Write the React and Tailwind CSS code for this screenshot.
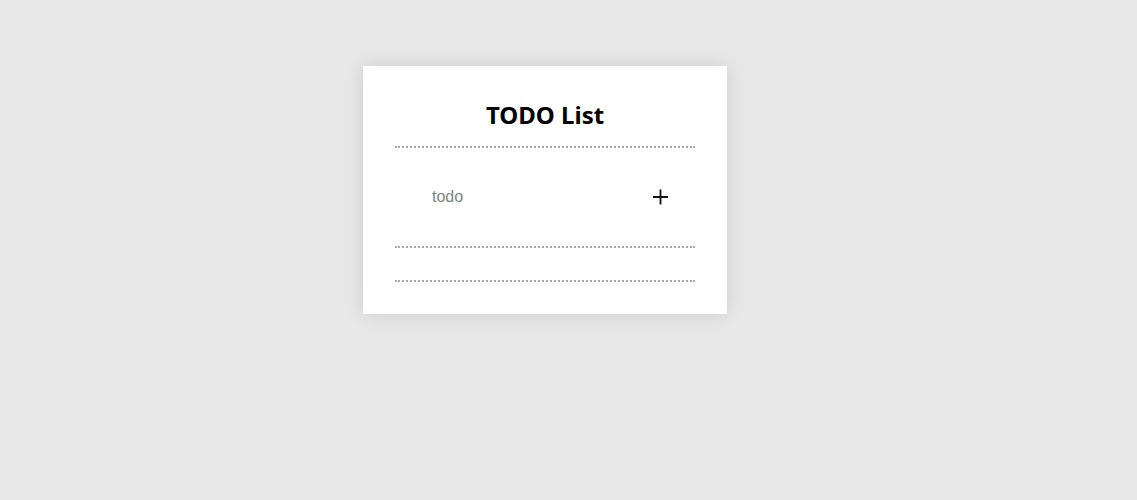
export default function App() {
  return (
    <div className="min-h-[500px] bg-[#e8e8e8] pt-[66px] pl-[363px]">
      <div className="w-[364px] bg-white px-8 pt-[33px] pb-[32px] shadow-[0_0_18px_rgba(0,0,0,0.12)]">
        <h1
          className="text-center text-[24px] leading-[32px] font-bold text-black pb-[15px] border-b-2 border-dotted border-[#a8a8a8]"
          style={{ fontFamily: '"Noto Sans", "Noto Sans CJK KR", sans-serif' }}
        >
          TODO List
        </h1>
        <form
          className="h-[100px] flex items-center border-b-2 border-dotted border-[#a8a8a8]"
          onSubmit={(e) => e.preventDefault()}
        >
          <input
            type="text"
            placeholder="todo"
            className="flex-1 min-w-0 pl-[37px] text-[16px] outline-none placeholder:text-[#7a8580]"
            style={{ fontFamily: '"Liberation Sans", Arial, sans-serif' }}
          />
          <button type="submit" className="w-[20px] h-[20px] mr-[25px] flex items-center justify-center">
            <svg width="18" height="18" viewBox="0 0 18 18" fill="none" stroke="#111" strokeWidth="1.8">
              <path d="M9.5 1.5v15M2 9h15" />
            </svg>
          </button>
        </form>
        <ul className="h-[34px] border-b-2 border-dotted border-[#a8a8a8]"></ul>
      </div>
    </div>
  );
}
